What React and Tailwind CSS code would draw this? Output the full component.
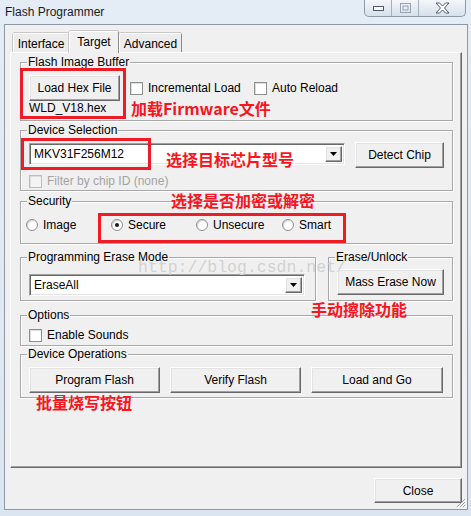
import React from "react"

const raised =
  "bg-[#f0f0f0] border-t border-l border-white border-r border-b border-r-[#696969] border-b-[#696969] shadow-[inset_-1px_-1px_0_#a0a0a0,inset_1px_1px_0_#e3e3e3]"

function Button({ className = "", children }) {
  return (
    <div className={`${raised} flex items-center justify-center leading-[14px] ${className}`}>
      {children}
    </div>
  )
}

function Check({ disabled }) {
  return (
    <div
      className={`w-[13px] h-[13px] shrink-0 border border-[#8e8f8f] shadow-[inset_1px_1px_0_#dcdcdc] ${
        disabled ? "bg-[#f4f4f4] border-[#bcbcbc]" : "bg-white"
      }`}
    />
  )
}

function Radio({ checked }) {
  return (
    <div className="w-[12px] h-[12px] shrink-0 rounded-full border border-[#8e8f8f] bg-white shadow-[inset_1px_1px_1px_#d4d4d4] flex items-center justify-center">
      {checked && <div className="w-[4px] h-[4px] rounded-full bg-[#1a1a1a]" />}
    </div>
  )
}

function Combo({ value, className = "" }) {
  return (
    <div
      className={`h-[22px] bg-white border-t border-l border-[#a0a0a0] border-r border-b border-r-white border-b-white shadow-[inset_1px_1px_0_#696969,inset_-1px_-1px_0_#e3e3e3] flex items-stretch p-[2px] ${className}`}
    >
      <div className="flex-1 pl-[2px] flex items-center leading-[14px]">{value}</div>
      <div className={`${raised} w-[17px] flex items-center justify-center`}>
        <svg width="7" height="4" viewBox="0 0 7 4">
          <path d="M0 0h7L3.5 4z" fill="#000" />
        </svg>
      </div>
    </div>
  )
}

function Group({ label, className = "", children }) {
  return (
    <div
      className={`relative border border-[#a8a8a8] shadow-[1px_1px_0_#fff,inset_1px_1px_0_#fff] ${className}`}
    >
      <span className="absolute top-[-8px] left-[6px] px-[1px] bg-[#f0f0f0] leading-[14px] whitespace-nowrap">
        {label}
      </span>
      {children}
    </div>
  )
}

function Tab({ label, selected, className = "" }) {
  return (
    <div
      className={`flex justify-center border-t border-l border-white border-r border-r-[#8a8a8a] rounded-t-[2px] shadow-[-1px_0_0_#c8c8c8,0_-1px_0_#c8c8c8] leading-[14px] ${
        selected ? "h-[22px] pt-[3px] bg-[#f0f0f0] relative z-10 -mb-[1px]" : "h-[19px] pt-[3px] bg-[#ececec]"
      } ${className}`}
    >
      {label}
    </div>
  )
}

export default function App() {
  const red = "absolute border-[3px] border-[#ee1c24]"
  const note =
    "absolute font-['Noto_Sans_CJK_SC',sans-serif] font-bold text-[16px] leading-[16px] text-[#f5161f] whitespace-nowrap"

  return (
    <div className="relative w-[471px] h-[516px] overflow-hidden bg-gradient-to-b from-[#e4ecf6] to-[#dbe5f1] text-[12px] text-black font-['Liberation_Sans',Arial,sans-serif]">
      {/* title bar */}
      <div className="flex h-[24px] items-start justify-between">
        <span className="pl-[5px] pt-[5px] leading-[14px] text-[#1b1b1b]">Flash Programmer</span>
        <div className="mr-[5px] flex h-[17px] rounded-b-[5px] border border-t-0 border-[#8d99a8] overflow-hidden bg-gradient-to-b from-[#f4f7fb] to-[#d6e0eb]">
          <div className="w-[27px] flex items-center justify-center border-r border-[#a5b0bd]">
            <svg width="11" height="5" viewBox="0 0 11 5">
              <rect x="0.5" y="0.5" width="10" height="4" fill="#fff" stroke="#4f5b6b" />
            </svg>
          </div>
          <div className="w-[27px] flex items-center justify-center border-r border-[#a5b0bd]">
            <svg width="11" height="10" viewBox="0 0 11 10">
              <rect x="0.5" y="0.5" width="10" height="9" fill="none" stroke="#9aa5b3" />
              <rect x="3" y="3" width="5" height="4" fill="none" stroke="#9aa5b3" />
            </svg>
          </div>
          <div className="w-[46px] flex items-center justify-center">
            <svg width="15" height="12" viewBox="0 0 15 12">
              <path
                d="M1 1h3.5l3 3 3-3H14l-4.5 5L14 11h-3.5l-3-3-3 3H1l4.5-5z"
                fill="#fff"
                stroke="#4f5b6b"
                strokeLinejoin="round"
              />
            </svg>
          </div>
        </div>
      </div>

      {/* client area */}
      <div className="relative ml-[4px] w-[464px] h-[486px] border border-[#8e99a6] bg-[#f0f0f0] flex flex-col">
        <div className="mt-[6px] ml-[8px] flex items-end h-[21px]">
          <Tab label="Interface" className="w-[56px]" />
          <Tab label="Target" selected className="w-[50px]" />
          <Tab label="Advanced" className="w-[63px]" />
        </div>

        <div className="ml-[5px] w-[452px] h-[416px] border-t border-l border-white border-r border-b border-r-[#696969] border-b-[#696969] shadow-[inset_-1px_-1px_0_#a0a0a0] pl-[9px] flex flex-col">
          <Group label="Flash Image Buffer" className="mt-[9px] w-[433px] h-[59px] pl-[8px] pt-[12px]">
            <div className="flex items-center">
              <Button className="w-[91px] h-[26px]">Load Hex File</Button>
              <div className="ml-[10px]"><Check /></div>
              <span className="ml-[5px] w-[106px] leading-[14px]">Incremental Load</span>
              <Check />
              <span className="ml-[5px] leading-[14px]">Auto Reload</span>
            </div>
            <div className="leading-[14px]">WLD_V18.hex</div>
          </Group>

          <Group label="Device Selection" className="mt-[9px] w-[433px] h-[61px] pl-[8px] pt-[11px]">
            <div className="flex items-start">
              <Combo value="MKV31F256M12" className="w-[316px] mt-[1px]" />
              <Button className="ml-[10px] w-[89px] h-[26px]">Detect Chip</Button>
            </div>
            <div className="mt-[6px] flex items-center">
              <Check disabled />
              <span className="ml-[5px] leading-[14px] text-[#a3a3a3]">Filter by chip ID (none)</span>
            </div>
          </Group>

          <Group label="Security" className="mt-[10px] w-[433px] h-[43px] pl-[5px] pt-[16px]">
            <div className="flex items-center">
              <Radio />
              <span className="ml-[5px] w-[68px] leading-[14px]">Image</span>
              <Radio checked />
              <span className="ml-[5px] w-[68px] leading-[14px]">Secure</span>
              <Radio />
              <span className="ml-[5px] w-[69px] leading-[14px]">Unsecure</span>
              <Radio />
              <span className="ml-[5px] leading-[14px]">Smart</span>
            </div>
          </Group>

          <div className="mt-[13px] flex gap-[12px]">
            <Group label="Programming Erase Mode" className="w-[296px] h-[44px] pl-[8px] pt-[16px]">
              <Combo value="EraseAll" className="w-[276px]" />
            </Group>
            <Group label="Erase/Unlock" className="w-[125px] h-[44px] pl-[8px] pt-[11px]">
              <Button className="w-[107px] h-[26px]">Mass Erase Now</Button>
            </Group>
          </div>

          <Group label="Options" className="mt-[14px] w-[433px] h-[31px] pl-[8px] pt-[12px]">
            <div className="flex items-center">
              <Check />
              <span className="ml-[5px] leading-[14px]">Enable Sounds</span>
            </div>
          </Group>

          <Group label="Device Operations" className="mt-[8px] w-[433px] h-[44px] pl-[8px] pt-[12px]">
            <div className="flex gap-[10px]">
              <Button className="w-[131px] h-[26px]">Program Flash</Button>
              <Button className="w-[131px] h-[26px]">Verify Flash</Button>
              <Button className="w-[132px] h-[26px]">Load and Go</Button>
            </div>
          </Group>
        </div>

        <div className="mt-[10px] self-end mr-[5px]">
          <Button className="w-[88px] h-[25px]">Close</Button>
        </div>

        {/* size grip */}
        <svg className="absolute right-[1px] bottom-[1px]" width="11" height="11" viewBox="0 0 11 11">
          <path d="M10 2L2 10M10 5L5 10M10 8L8 10" stroke="#a0a0a0" strokeWidth="1" />
          <path d="M11 3L3 11M11 6L6 11M11 9L9 11" stroke="#fff" strokeWidth="1" />
        </svg>
      </div>

      {/* watermark */}
      <div className="absolute left-[138px] top-[259px] font-['Liberation_Mono',monospace] text-[16.5px] leading-[18px] text-[#d2d2d2]">
        http://blog.csdn.net/
      </div>

      {/* annotations */}
      <div className={`${red} left-[20px] top-[68px] w-[106px] h-[51px]`} />
      <div className={`${note} left-[131px] top-[100px]`}>加载Firmware文件</div>

      <div className={`${red} left-[21px] top-[138px] w-[130px] h-[32px]`} />
      <div className={`${note} left-[166px] top-[151px]`}>选择目标芯片型号</div>

      <div className={`${note} left-[171px] top-[192px]`}>选择是否加密或解密</div>
      <div className={`${red} left-[98px] top-[213px] w-[248px] h-[30px]`} />

      <div className={`${note} left-[311px] top-[301px]`}>手动擦除功能</div>
      <div className={`${note} left-[36px] top-[394px]`}>批量烧写按钮</div>
    </div>
  )
}
